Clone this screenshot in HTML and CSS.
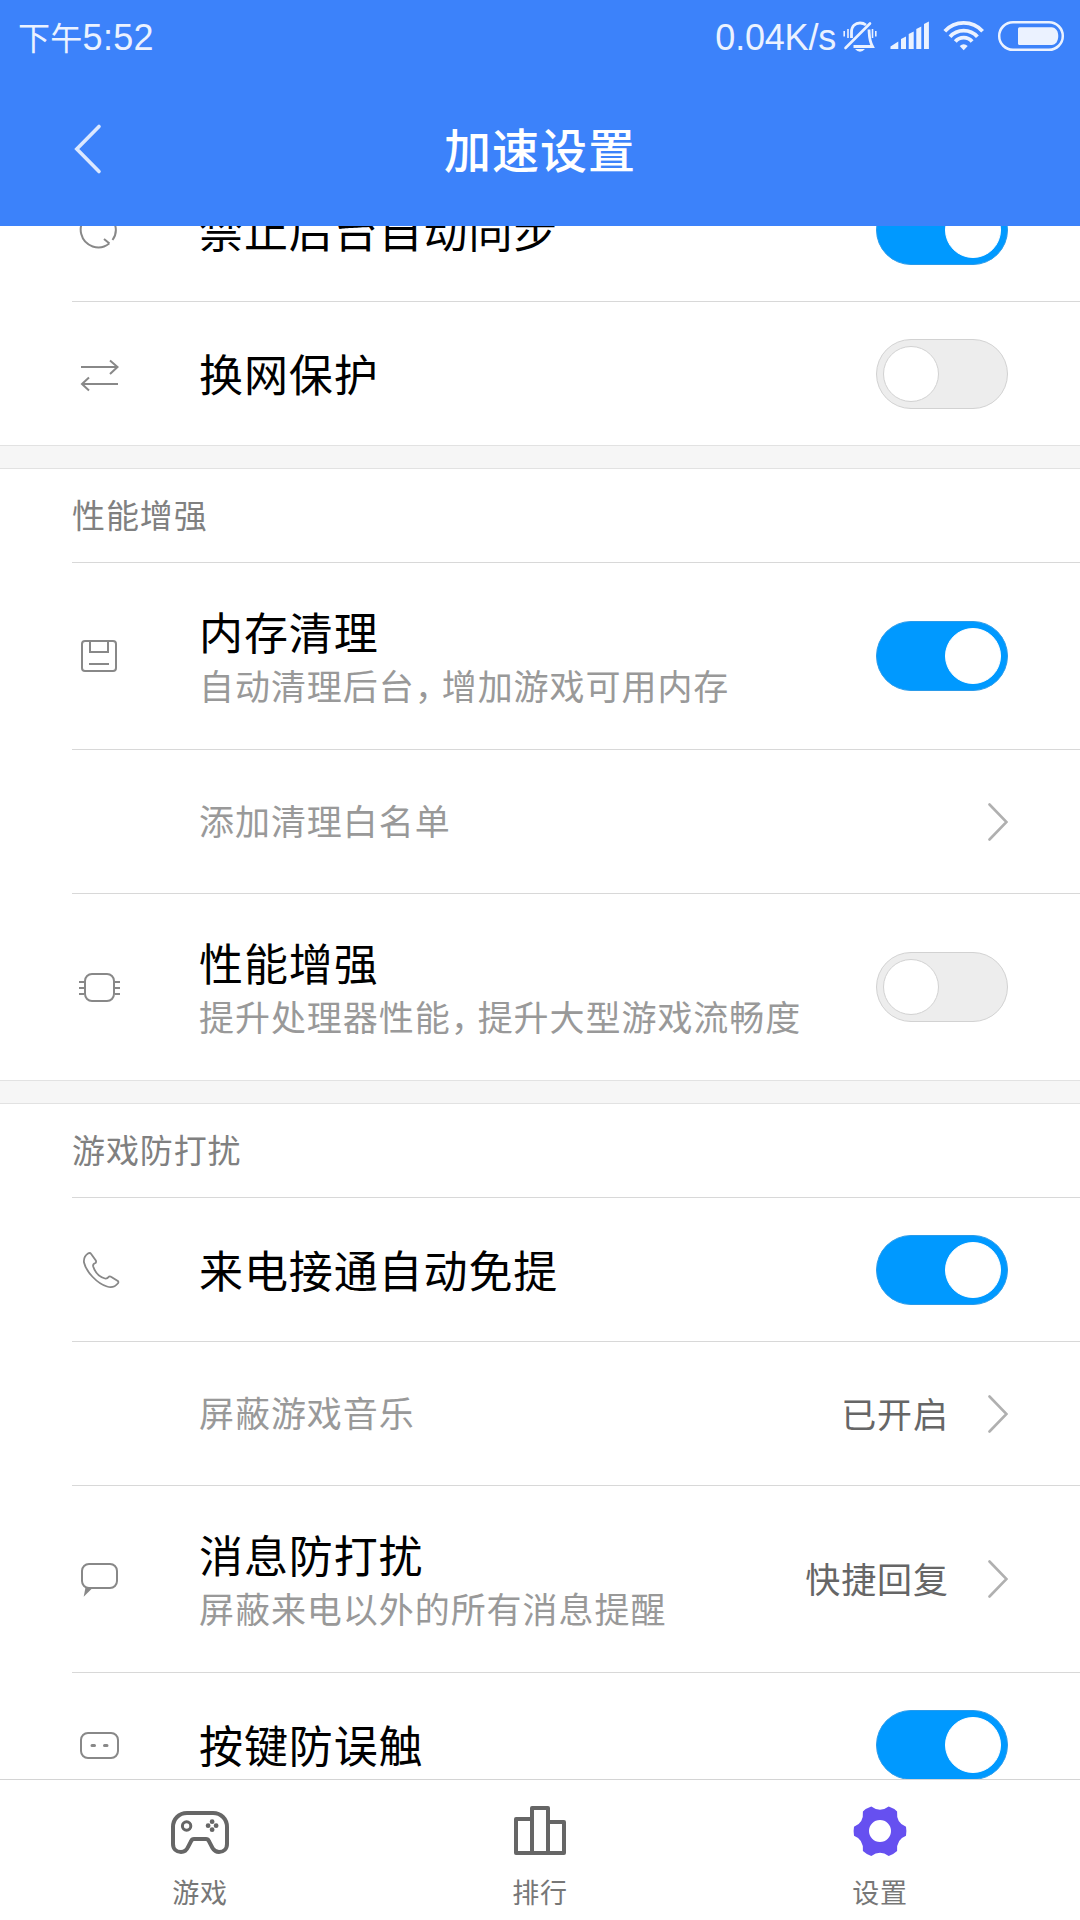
FILE: index.html
```html
<!DOCTYPE html>
<html lang="zh-CN">
<head>
<meta charset="utf-8">
<title>加速设置</title>
<link rel="stylesheet" href="styles.css">
</head>
<body>
<div class="screen">
  <header class="header">
    <div class="status">
      <div class="clock"><span class="ampm">下午</span>5:52</div>
      <div class="status-right">
        <span class="speed">0.04K/s</span>
        <svg class="status-icons" viewBox="840 14 228 44" width="228" height="44" fill="none" stroke="#ebf2ff">
          <path d="M851.5 38V32C851.5 26 855.5 23 860 23C862.500 23 864.500 23.800 866 25" stroke-width="2.800"/>
          <path d="M869 29.500C869.500 37 869 40 872.500 46.500H853.500" stroke-width="2.800"/>
          <path d="M845.500 48L870 23.500" stroke-width="2.600" stroke-linecap="round"/>
          <path d="M848 29V38M844.200 31V36.500M872.500 29V38M875.800 31V36.500" stroke-width="1.600"/>
          <path d="M855 49H865Q860 54.500 855 49Z" fill="#ebf2ff" stroke="none"/>
          <path d="M890.500 49V46.500L898.300 41.500V49ZM901 49V39L906 36.500V49ZM908.700 49V34L913.700 31.500V49ZM916.300 49V29L921.300 26.500V49ZM924 49V24L928.900 21.500V49Z" fill="#ebf2ff" stroke="none"/>
          <g stroke-width="3.800">
            <path d="M944.800 31.300A25.600 25.600 0 0 1 982.600 31.300"/>
            <path d="M950 36.700A18.300 18.300 0 0 1 977.400 36.700"/>
            <path d="M955.300 41.600A11 11 0 0 1 972.100 41.600"/>
          </g>
          <path d="M963.700 50.300L959.700 46Q963.700 42.500 967.700 46Z" fill="#ebf2ff" stroke="none"/>
          <rect x="999.200" y="22.200" width="63.600" height="27.600" rx="13.800" stroke-width="2.500"/>
          <path d="M1019.500 27.300H1051.500C1060.500 27.300 1060.500 45 1051.500 45H1019.500Q1018 45 1018 43.500V28.800Q1018 27.300 1019.500 27.300Z" fill="#ebf2ff" stroke="none"/>
        </svg>
      </div>
    </div>
    <div class="titlebar">
      <svg class="back" viewBox="0 0 30 52" width="30" height="52"><path d="M27 3.500L4.800 26L27 48.500" fill="none" stroke="#dbe8ff" stroke-width="3.600" stroke-linecap="round"/></svg>
      <h1 class="page-title">加速设置</h1>
    </div>
  </header>

  <main class="content">
    <section class="list">
      <div class="row">
        <svg class="icon" viewBox="0 0 48 48"><path d="M34.200 37.500A17.500 17.500 0 1 1 37.500 34M29 33L34.500 37.500"/></svg>
        <div class="label"><div class="name">禁止后台自动同步</div></div>
        <div class="toggle on"><i class="knob"></i></div>
      </div>
      <div class="row last">
        <svg class="icon" viewBox="0 0 48 48"><path d="M6 17H42.500M35 10.500L42.500 17L35 24M43 34H7M14 27.500L7 34L14 40.500"/></svg>
        <div class="label"><div class="name">换网保护</div></div>
        <div class="toggle"><i class="knob"></i></div>
      </div>
    </section>

    <section class="list">
      <div class="gap"></div>
      <h2 class="section-title">性能增强</h2>
      <div class="row tall">
        <svg class="icon" viewBox="0 0 48 48"><rect x="7" y="9" width="34" height="30" rx="3"/><path d="M15 9V20H33V9M14 32H34"/></svg>
        <div class="label"><div class="name">内存清理</div><div class="desc">自动清理后台<span class="comma">，</span>增加游戏可用内存</div></div>
        <div class="toggle on"><i class="knob"></i></div>
      </div>
      <div class="row">
        <div class="icon"></div>
        <div class="label single"><div class="desc">添加清理白名单</div></div>
        <svg class="chevron" viewBox="0 0 20 40"><path d="M1.500 2.500L18.500 20L1.500 37.500"/></svg>
      </div>
      <div class="row tall last">
        <svg class="icon" viewBox="0 0 48 48"><rect x="10" y="11" width="29" height="27" rx="7"/><path d="M4 19H9M4 25H9M4 31H9M40 19H45M40 25H45M40 31H45"/></svg>
        <div class="label"><div class="name">性能增强</div><div class="desc">提升处理器性能<span class="comma">，</span>提升大型游戏流畅度</div></div>
        <div class="toggle"><i class="knob"></i></div>
      </div>
    </section>

    <section class="list">
      <div class="gap"></div>
      <h2 class="section-title">游戏防打扰</h2>
      <div class="row">
        <svg class="icon" viewBox="0 0 48 48"><path class="thin" d="M14.500 7Q15.500 7 16 7.800L20.800 14.500Q21.500 16 20.500 17Q17.500 18 18.200 20.500C20 26 24.500 31 30 32.500Q32 33 34 30.600Q35 30 36 30.800L42.800 35Q43.800 36 43 37.200C40 41 36 41.800 32 40.500C22 37.500 11 25.500 9 16.500C8.500 12.500 10 9.500 13 7.500Q13.800 7 14.500 7Z"/></svg>
        <div class="label"><div class="name">来电接通自动免提</div></div>
        <div class="toggle on"><i class="knob"></i></div>
      </div>
      <div class="row">
        <div class="icon"></div>
        <div class="label single"><div class="desc">屏蔽游戏音乐</div></div>
        <div class="value">已开启</div>
        <svg class="chevron" viewBox="0 0 20 40"><path d="M1.500 2.500L18.500 20L1.500 37.500"/></svg>
      </div>
      <div class="row tall">
        <svg class="icon" viewBox="0 0 48 48"><rect x="7" y="9" width="35" height="24" rx="7"/><path class="solid" d="M10.500 32.500H18L8.700 41.700Z"/></svg>
        <div class="label"><div class="name">消息防打扰</div><div class="desc">屏蔽来电以外的所有消息提醒</div></div>
        <div class="value">快捷回复</div>
        <svg class="chevron" viewBox="0 0 20 40"><path d="M1.500 2.500L18.500 20L1.500 37.500"/></svg>
      </div>
      <div class="row">
        <svg class="icon" viewBox="0 0 48 48"><rect x="6" y="12" width="37" height="25" rx="7"/><path class="keys" d="M17 24.500H19.500M29.500 24.500H32"/></svg>
        <div class="label"><div class="name">按键防误触</div></div>
        <div class="toggle on"><i class="knob"></i></div>
      </div>
    </section>
  </main>

  <nav class="nav">
    <div class="tab">
      <svg viewBox="0 0 60 60" width="60" height="60" fill="none" stroke="#666" stroke-width="4">
        <path d="M17 12H43C51 12 57 18 57 26V43C57 48 53.500 51 49 51C46 51 44 49.500 42.500 47L38.800 40Q38 38 36 38H24Q22 38 21.200 40L18 46C16.500 49.500 14.500 51 11 51C6.500 51 3 48 3 43V26C3 18 9 12 17 12Z"/>
        <circle cx="16.600" cy="25" r="4.200" stroke-width="3"/>
        <g fill="#666" stroke="none"><circle cx="42.100" cy="20.700" r="2.400"/><circle cx="42.100" cy="28.700" r="2.400"/><circle cx="38.100" cy="24.700" r="2.400"/><circle cx="46.100" cy="24.700" r="2.400"/></g>
      </svg>
      <span>游戏</span>
    </div>
    <div class="tab">
      <svg viewBox="0 0 60 60" width="60" height="60" fill="none" stroke="#666" stroke-width="4" stroke-linejoin="round">
        <path d="M22 18H6V52H54V21H38M22 52V7H38V52"/>
      </svg>
      <span>排行</span>
    </div>
    <div class="tab">
      <svg viewBox="0 0 60 60" width="60" height="60" fill="#6650f0">
        <path fill-rule="evenodd" d="M21.300 5.500Q30 12 38.700 5.500Q43.500 7 47.100 10.500Q46 22 56 25.700Q56.800 30 56 34.700Q46 38.500 47.100 50Q43.500 53.500 38.700 54.900Q30 48.500 21.300 54.900Q16.500 53.500 12.900 50Q14 38.500 4 34.700Q3.200 30 4 25.700Q14 22 12.900 10.500Q16.500 7 21.300 5.500ZM30 19A11 11 0 1 0 30 41A11 11 0 1 0 30 19Z"/>
      </svg>
      <span>设置</span>
    </div>
  </nav>
</div>
</body>
</html>
```
FILE: styles.css
```css
* { box-sizing: border-box; }

body {
  margin: 0;
  background: #fff;
  font-family: "Noto Sans CJK SC", sans-serif;
}

.screen {
  display: flex;
  flex-direction: column;
  width: 1080px;
  height: 1920px;
  overflow: hidden;
}

.header {
  flex: none;
  height: 226px;
  background: #3c82fa;
  color: #fff;
}

.status {
  display: flex;
  justify-content: space-between;
  height: 72px;
  padding: 0 12px 0 18px;
  font: 36px/76px "Liberation Sans", "Noto Sans CJK SC", sans-serif;
  color: #ebf2ff;
}

.clock {
  line-height: 72px;
  letter-spacing: 0.3px;
}

.ampm {
  font-family: "Noto Sans CJK SC", sans-serif;
  font-size: 32px;
}

.status-right { display: flex; }
.status-icons { margin: 14px 0 0 4px; }
.speed { letter-spacing: -0.2px; }

.titlebar {
  display: grid;
  grid-template-columns: 30px 1fr 30px;
  align-items: center;
  height: 154px;
  padding: 0 72px;
}

.page-title {
  margin: 0;
  padding-bottom: 2px;
  font-size: 47px;
  font-weight: 500;
  line-height: 60px;
  letter-spacing: 1px;
  text-align: center;
}

.content {
  flex: 1;
  display: flex;
  flex-direction: column;
  justify-content: flex-end;
  min-height: 0;
  margin-bottom: -38px;
  overflow: hidden;
}

.list { flex: none; }

.row {
  display: flex;
  align-items: center;
  height: 144px;
  padding: 1px 72px 0 3px;
  margin-left: 72px;
  border-bottom: 1px solid #d8d8d8;
}

.row.tall { height: 187px; padding-top: 0; }

.row.last {
  margin-left: 0;
  padding-left: 75px;
  border-bottom-color: #e2e2e2;
}

.gap {
  height: 23px;
  background: #f6f6f6;
  border-bottom: 1px solid #e2e2e2;
}

.section-title {
  height: 94px;
  margin: 0 0 0 72px;
  border-bottom: 1px solid #d8d8d8;
  font-size: 33px;
  font-weight: 400;
  line-height: 91px;
  letter-spacing: 0.9px;
  color: #808080;
}

.icon {
  flex: none;
  width: 48px;
  height: 48px;
  margin-right: 75px;
  fill: none;
  stroke: #888;
  stroke-width: 2;
}

.icon .thin { stroke-width: 1.8; }
.icon .solid { fill: #888; stroke: none; }
.icon .keys { stroke-width: 3; stroke-linecap: round; }

.label {
  flex: 1;
  padding: 0 0 2px 1px;
  white-space: nowrap;
}

.label.single { padding-bottom: 4px; }

.name {
  font-size: 44px;
  line-height: 60px;
  letter-spacing: 0.9px;
  color: #000;
}

.desc {
  font-size: 35px;
  line-height: 48px;
  letter-spacing: 0.95px;
  color: #999;
}

.comma { letter-spacing: -8px; }

.value {
  margin-right: 39px;
  padding-bottom: 3px;
  font-size: 35px;
  line-height: 48px;
  letter-spacing: 0.95px;
  color: #666;
}

.chevron {
  flex: none;
  width: 20px;
  height: 40px;
  fill: none;
  stroke: #b0b0b0;
  stroke-width: 2.6;
  stroke-linecap: round;
}

.toggle {
  display: flex;
  flex: none;
  width: 132px;
  height: 70px;
  padding: 6px;
  border: 1px solid #d2d2d2;
  border-radius: 35px;
  background: #ededed;
}

.knob {
  width: 56px;
  height: 56px;
  border: 1px solid #d2d2d2;
  border-radius: 50%;
  background: #fff;
}

.toggle.on {
  justify-content: flex-end;
  border-color: #2a9bea;
  background: #0099ff;
}

.toggle.on .knob { border-color: #fff; }

.nav {
  position: relative;
  z-index: 1;
  flex: none;
  display: grid;
  grid-template-columns: repeat(3, 340px);
  justify-content: center;
  height: 141px;
  border-top: 1px solid #d4d4d4;
  background: #fff;
}

.tab {
  display: flex;
  flex-direction: column;
  align-items: center;
  padding-top: 21px;
  font-size: 27px;
  line-height: 36px;
  letter-spacing: 0.8px;
  color: #777;
}

.tab span { margin-top: 13px; }
```
